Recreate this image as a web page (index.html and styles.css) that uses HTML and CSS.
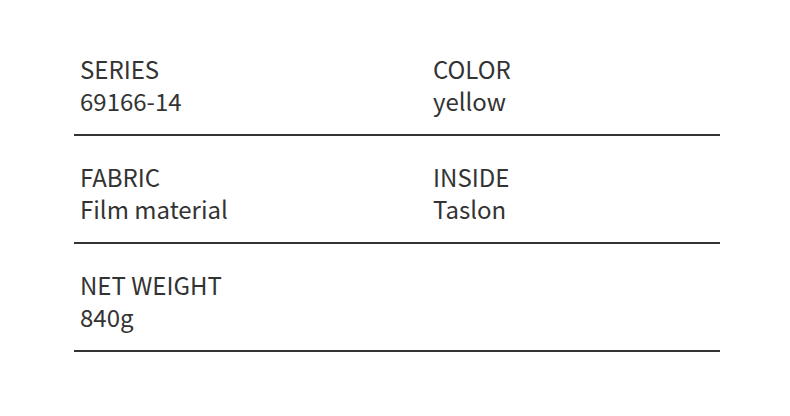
FILE: index.html
```html
<!DOCTYPE html>
<html>
<head>
<meta charset="utf-8">
<link rel="stylesheet" href="styles.css">
</head>
<body>
<div class="specs">
  <div class="row">
    <div class="cell"><div class="label">SERIES</div><div class="value">69166-14</div></div>
    <div class="cell"><div class="label">COLOR</div><div class="value">yellow</div></div>
  </div>
  <div class="row">
    <div class="cell"><div class="label">FABRIC</div><div class="value">Film material</div></div>
    <div class="cell"><div class="label">INSIDE</div><div class="value">Taslon</div></div>
  </div>
  <div class="row">
    <div class="cell"><div class="label">NET WEIGHT</div><div class="value">840g</div></div>
    <div class="cell"></div>
  </div>
</div>
</body>
</html>
```

FILE: styles.css
```css
html, body { margin: 0; padding: 0; background: #fff; }
body {
  font-family: "Noto Sans CJK SC", "Noto Sans", sans-serif;
  color: #333;
}
.specs {
  width: 646px;
  margin: 0 0 0 74px;
  padding-top: 28px;
}
.row {
  display: grid;
  grid-template-columns: 353px 1fr;
  padding: 25px 0 17px 6px;
  border-bottom: 2px solid #333;
}
.label, .value {
  font-size: 24px;
  line-height: 32px;
  height: 32px;
}
```
